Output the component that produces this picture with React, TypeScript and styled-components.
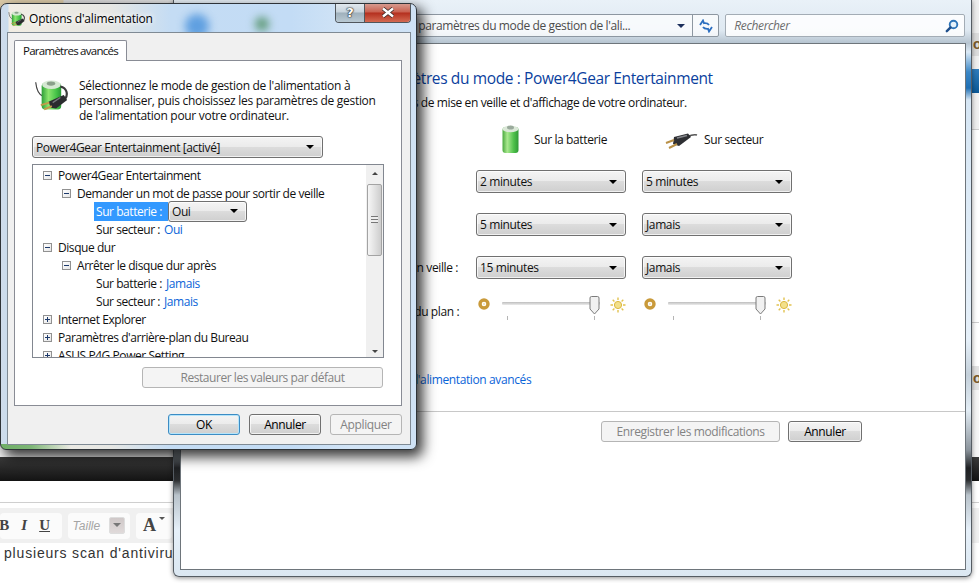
import { Fragment } from 'react'
import styled, { createGlobalStyle, css } from 'styled-components'

const GlobalStyle = createGlobalStyle`
  html, body {
    margin: 0;
    padding: 0;
    width: 979px;
    height: 583px;
    overflow: hidden;
    background: #fff;
  }
  * {
    box-sizing: border-box;
  }
  body {
    font-family: 'Open Sans', 'Noto Sans', sans-serif;
    font-size: 12px;
    letter-spacing: -0.38px;
    color: #111;
  }
`

const Desktop = styled.div`
  position: relative;
  width: 979px;
  height: 583px;
  overflow: hidden;
`

/* ---- browser page behind the windows ---- */

const Page = styled.div`
  display: flex;
  flex-direction: column;
  height: 583px;
  font-family: 'Liberation Sans', sans-serif;
  letter-spacing: 0;
`

const Band = styled.div<{ $h: number; $bg: string; $line?: boolean }>`
  height: ${({ $h }) => $h}px;
  background: ${({ $bg }) => $bg};
  border-bottom: ${({ $line }) => ($line ? '1px solid #cfcfcf' : 'none')};
  padding-left: 973px;
  font-size: 14px;
  font-weight: bold;
  line-height: ${({ $h }) => $h}px;
  color: #7a5a2a;
  white-space: nowrap;
  overflow: hidden;
`

const EditorBar = styled.div`
  height: 35px;
  flex: none;
  background: #f0f0f0;
  display: flex;
  align-items: center;
  gap: 6px;
`

const EditorGroup = styled.div<{ $w: number }>`
  width: ${({ $w }) => $w}px;
  height: 26px;
  background: #fbfbfb;
  border-radius: 4px;
  display: flex;
  align-items: center;
  justify-content: space-around;
  overflow: hidden;
`

const StyleGroup = styled(EditorGroup)`
  justify-content: flex-end;
  gap: 12px;
  padding-right: 12px;
`

const StyleLetter = styled.span<{ $italic?: boolean; $under?: boolean }>`
  font-family: 'Liberation Serif', serif;
  font-weight: bold;
  font-size: 15px;
  color: #444;
  flex: none;
  font-style: ${({ $italic }) => ($italic ? 'italic' : 'normal')};
  text-decoration: ${({ $under }) => ($under ? 'underline' : 'none')};
`

const SizeLabel = styled.span`
  font-size: 12px;
  font-style: italic;
  color: #a5a5a5;
`

const SizeCaret = styled.span`
  width: 16px;
  height: 17px;
  border-radius: 2px;
  background: linear-gradient(#cfc8c8, #e0dada);
  border: 1px solid #ddd;
  position: relative;
  &::after {
    content: '';
    position: absolute;
    left: 3px;
    top: 5px;
    border: 4px solid transparent;
    border-top: 4px solid #777;
  }
`

const BigLetter = styled.span`
  font-family: 'Liberation Serif', serif;
  font-weight: bold;
  font-size: 18px;
  color: #444;
  &::after {
    content: '';
    display: inline-block;
    margin-left: 3px;
    vertical-align: 8px;
    border: 3px solid transparent;
    border-top: 3px solid #555;
  }
`

const PostText = styled.div`
  padding: 2px 0 0 4px;
  font-size: 14px;
  line-height: 16px;
  letter-spacing: 0.82px;
  color: #333;
  white-space: nowrap;
`

/* ---- aero glass windows ---- */

const ParamWindow = styled.div`
  position: absolute;
  left: 173px;
  top: 0;
  width: 799px;
  height: 577px;
  border: 1px solid #555c63;
  border-top: none;
  border-radius: 0 0 6px 6px;
  padding-left: 6px;
  padding-right: 5px;
  display: flex;
  flex-direction: column;
  box-shadow: 0 1px 5px rgba(0, 0, 0, 0.45);
  background: linear-gradient(
    180deg,
    #e9f1f8 0,
    #dfe9f2 30px,
    #b6c4d0 43px,
    #dceaf6 52px,
    #3b87c6 72px,
    #1f6fb4 88px,
    #d6e6f4 100px,
    #e6f0f9 340px,
    #c4d0da 375px,
    #e3edf5 410px,
    #8b949c 450px,
    #1e2022 468px,
    #2a2c2e 480px,
    #b8c2ca 495px,
    #e6f0f9 530px,
    #dbe7f1 577px
  );
`

const NavBar = styled.div`
  height: 43px;
  flex: none;
  padding: 14px 1px 6px 0;
  display: flex;
  justify-content: flex-end;
  gap: 6px;
`

const AddressBox = styled.div`
  width: 545px;
  height: 23px;
  display: flex;
  align-items: center;
  justify-content: flex-end;
  background: rgba(255, 255, 255, 0.72);
  border: 1px solid #8d97a1;
  border-radius: 2px;
  color: #4c4c4c;
`

const AddressText = styled.span`
  white-space: nowrap;
  margin-right: 47px;
`

const AddressCaret = styled.span`
  width: 0;
  height: 0;
  border: 4px solid transparent;
  border-top: 4px solid #1c2f5c;
  border-bottom: none;
  margin-right: 7px;
`

const RefreshCell = styled.span`
  width: 26px;
  height: 100%;
  display: flex;
  align-items: center;
  justify-content: center;
  border-left: 1px solid #8d97a1;
`

const SearchBox = styled.div`
  width: 242px;
  height: 23px;
  background: rgba(255, 255, 255, 0.85);
  border: 1px solid #a3acb5;
  border-radius: 2px;
  display: flex;
  align-items: center;
  justify-content: space-between;
  padding: 0 5px 0 8px;
  font-style: italic;
  color: #6d6d6d;
`

const ContentPane = styled.div`
  width: 786px;
  height: 527px;
  background: #fff;
  border: 1px solid #6e757b;
  display: flex;
  flex-direction: column;
`

const ContentMain = styled.div`
  height: 368px;
  flex: none;
  border-bottom: 1px solid #c8c8c8;
  padding: 24px 0 0 102px;
`

const PlanTitle = styled.div`
  font-size: 15.5px;
  line-height: 20px;
  color: #0b3f9e;
  white-space: nowrap;
`

const PlanSubtitle = styled.div`
  margin-top: 7px;
  line-height: 16px;
  white-space: nowrap;
`

const SettingsGrid = styled.div`
  margin-top: 14px;
  display: grid;
  grid-template-columns: 177px 150px 150px;
  grid-template-rows: 45px 43px 43px 40px;
  column-gap: 16px;
`

const RowLabel = styled.div<{ $tall?: boolean }>`
  padding-left: 26px;
  line-height: ${({ $tall }) => ($tall ? 32 : 23)}px;
  white-space: nowrap;
`

const SliderLabel = styled(RowLabel)`
  padding-left: 22px;
`

const SourceCell = styled.div<{ $pad: number; $gap: number }>`
  display: flex;
  align-items: flex-start;
  height: 30px;
  padding-left: ${({ $pad }) => $pad}px;
  gap: ${({ $gap }) => $gap}px;
`

const SourceLabel = styled.span`
  line-height: 30px;
`

const PlugSlot = styled.span`
  padding-top: 7px;
  display: flex;
`

const comboFace = css`
  background: linear-gradient(180deg, #f4f4f4 0, #ebebeb 48%, #dcdcdc 50%, #cfcfcf 100%);
  border: 1px solid #707070;
  border-radius: 3px;
  box-shadow: inset 0 0 0 1px rgba(255, 255, 255, 0.7);
`

const Combo = styled.div<{ $w?: number; $h?: number }>`
  ${comboFace}
  width: ${({ $w }) => ($w ? `${$w}px` : '100%')};
  height: ${({ $h }) => $h ?? 23}px;
  display: flex;
  align-items: center;
  justify-content: space-between;
  padding: 0 6px 0 3px;
  white-space: nowrap;
  flex: none;
  &::after {
    content: '';
    border: 4px solid transparent;
    border-top: 4px solid #000;
    border-bottom: none;
    width: 0;
    height: 0;
    margin-right: 2px;
  }
`

const PlanCombo = styled(Combo)`
  margin-top: 13px;
`

const SliderCell = styled.div`
  display: flex;
  align-items: flex-start;
  padding-left: 2px;
`

const DimSlot = styled.span`
  margin-top: 2px;
  display: flex;
`

const SliderTrack = styled.div`
  position: relative;
  width: 98px;
  height: 26px;
  margin-left: 12px;
  &::before {
    content: '';
    position: absolute;
    left: 0;
    right: 0;
    top: 6px;
    height: 3px;
    background: linear-gradient(#bdbdbd, #ececec);
    border-radius: 1px;
  }
`

const SliderThumb = styled.svg`
  position: absolute;
  left: 87px;
  top: 0;
`

const SliderTick = styled.span<{ $x: number }>`
  position: absolute;
  left: ${({ $x }) => $x}px;
  top: 20px;
  width: 1px;
  height: 4px;
  background: #b5b5b5;
`

const SunSlot = styled.span`
  margin: 1px 0 0 10px;
  display: flex;
`

const AdvancedLink = styled.div`
  margin-top: 44px;
  line-height: 16px;
  color: #0a64d8;
  white-space: nowrap;
`

const ContentFooter = styled.div`
  display: flex;
  justify-content: flex-end;
  gap: 8px;
  padding: 9px 103px 0 0;
`

const Button = styled.button<{ $w: number; $h?: number; $default?: boolean }>`
  width: ${({ $w }) => $w}px;
  height: ${({ $h }) => $h ?? 21}px;
  font: inherit;
  letter-spacing: inherit;
  padding: 0;
  flex: none;
  color: #000;
  border-radius: 3px;
  border: 1px solid ${({ $default }) => ($default ? '#3c8cc4' : '#707070')};
  background: linear-gradient(180deg, #f4f4f4 0, #ebebeb 48%, #dcdcdc 50%, #cfcfcf 100%);
  box-shadow: inset 0 0 0 1px ${({ $default }) => ($default ? '#b5e4fa' : 'rgba(255,255,255,0.7)')};
  &:disabled {
    color: #838383;
    border-color: #b5b5b5;
    background: #f4f4f4;
    box-shadow: none;
  }
`

const DialogWindow = styled.div`
  position: absolute;
  left: 0;
  top: 3px;
  width: 417px;
  height: 447px;
  border: 1px solid #2e3338;
  border-radius: 7px 7px 6px 6px;
  display: flex;
  flex-direction: column;
  overflow: hidden;
  padding: 0 5px 4px 6px;
  background:
    linear-gradient(90deg, #6fae66 0, #7db676 30px, rgba(190, 220, 240, 0) 70px) left bottom / 100% 5px no-repeat,
    linear-gradient(90deg, #cfdceb 0, #c9dced 7px, rgba(201, 220, 237, 0) 8px) left top / 100% 100% no-repeat,
    linear-gradient(90deg, #f2ede3 0, #e6e7e4 110px, #c4dcf4 170px, #c3dcf5 290px, #d2e4f6 350px, #cfe2f5 100%);
`

const DialogShadow = styled.div`
  position: absolute;
  left: 0;
  top: 3px;
  width: 417px;
  height: 447px;
  border-radius: 7px;
  box-shadow: 5px 6px 13px 1px rgba(0, 0, 0, 0.78);
`

const GlassBlob = styled.span<{ $x: number; $y: number; $size: number; $color: string }>`
  position: absolute;
  left: ${({ $x }) => $x}px;
  top: ${({ $y }) => $y}px;
  width: ${({ $size }) => $size}px;
  height: ${({ $size }) => $size}px;
  border-radius: 50%;
  background: ${({ $color }) => $color};
  filter: blur(4px);
`

const TitleBar = styled.div`
  position: relative;
  height: 28px;
  flex: none;
  display: flex;
  align-items: center;
  gap: 4px;
  padding: 0 0 0 1px;
`

const TitleText = styled.span`
  position: relative;
  font-size: 12px;
  letter-spacing: -0.2px;
  color: #000;
  text-shadow: 0 0 6px #fff, 0 0 6px #fff;
  white-space: nowrap;
`

const CaptionButtons = styled.div`
  position: absolute;
  right: 0;
  top: -1px;
  height: 20px;
  display: flex;
  border: 1px solid #50565c;
  border-top: none;
  border-radius: 0 0 4px 4px;
  overflow: hidden;
`

const CaptionButton = styled.span<{ $close?: boolean }>`
  width: ${({ $close }) => ($close ? 46 : 28)}px;
  display: flex;
  align-items: center;
  justify-content: center;
  font-family: 'DejaVu Sans', sans-serif;
  font-weight: bold;
  font-size: 13px;
  letter-spacing: 0;
  color: #fff;
  text-shadow: 0 0 1px #222, 0 0 1px #222, 0 0 2px #222;
  border-left: ${({ $close }) => ($close ? '1px solid #50565c' : 'none')};
  background: ${({ $close }) =>
    $close
      ? 'linear-gradient(180deg, #d8a196 0, #c9604f 48%, #b42f1e 52%, #d46a52 100%)'
      : 'linear-gradient(180deg, #e4ebf1 0, #c7d3dc 48%, #9fb0bb 52%, #b9c9d3 100%)'};
`

const DialogClient = styled.div`
  position: relative;
  flex: 1;
  background: #f0f0f0;
  border: 1px solid #7f8a94;
  padding: 7px 8px 0 6px;
  display: flex;
  flex-direction: column;
  align-items: flex-start;
`

const TabHead = styled.div`
  position: relative;
  z-index: 1;
  width: 113px;
  height: 21px;
  margin-bottom: -1px;
  background: #fff;
  border: 1px solid #898c95;
  border-bottom: none;
  border-radius: 2px 2px 0 0;
  text-align: center;
  font-size: 11.5px;
  letter-spacing: -0.74px;
  line-height: 20px;
  white-space: nowrap;
`

const TabPage = styled.div`
  width: 388px;
  height: 346px;
  flex: none;
  background: #fff;
  border: 1px solid #898c95;
  padding: 17px 0 0 17px;
  display: flex;
  flex-direction: column;
  align-items: flex-start;
`

const IntroRow = styled.div`
  display: flex;
  padding-left: 2px;
  gap: 11px;
  height: 45px;
`

const IntroText = styled.div`
  line-height: 15px;
  width: 300px;
  letter-spacing: -0.3px;
`

const Tree = styled.div`
  margin-top: 6px;
  width: 352px;
  height: 194px;
  flex: none;
  border: 1px solid #828790;
  display: flex;
  overflow: hidden;
  letter-spacing: -0.44px;
`

const TreeList = styled.div`
  flex: 1;
  overflow: hidden;
  padding-top: 1px;
`

const TreeRow = styled.div<{ $level: number }>`
  height: 18px;
  display: flex;
  align-items: center;
  white-space: nowrap;
  padding-left: ${({ $level }) => [10, 29, 61][$level]}px;
`

const Expander = styled.span<{ $open: boolean }>`
  position: relative;
  width: 9px;
  height: 9px;
  margin-right: 6px;
  flex: none;
  border: 1px solid #919191;
  background: linear-gradient(135deg, #fff, #e6e6e6);
  &::before {
    content: '';
    position: absolute;
    left: 1px;
    top: 3px;
    width: 5px;
    height: 1px;
    background: #1d3a6c;
  }
  &::after {
    content: '';
    display: ${({ $open }) => ($open ? 'none' : 'block')};
    position: absolute;
    left: 3px;
    top: 1px;
    width: 1px;
    height: 5px;
    background: #1d3a6c;
  }
`

const OptionLabel = styled.span<{ $selected?: boolean }>`
  display: flex;
  align-items: center;
  height: 19px;
  padding: 0 2px;
  width: ${({ $selected }) => ($selected ? '74px' : 'auto')};
  background: ${({ $selected }) => ($selected ? '#3399ff' : 'transparent')};
  color: ${({ $selected }) => ($selected ? '#fff' : 'inherit')};
`

const OptionValue = styled.span`
  color: #0a64d8;
  margin-left: 2px;
`

const ScrollBar = styled.div`
  width: 17px;
  flex: none;
  background: #f0f0f0;
  display: flex;
  flex-direction: column;
  align-items: center;
  justify-content: space-between;
  padding: 7px 0 4px;
  position: relative;
`

const ScrollArrow = styled.span<{ $down?: boolean }>`
  width: 0;
  height: 0;
  border-left: 3px solid transparent;
  border-right: 3px solid transparent;
  border-bottom: ${({ $down }) => ($down ? 'none' : '3px solid #444')};
  border-top: ${({ $down }) => ($down ? '3px solid #444' : 'none')};
`

const ScrollThumb = styled.span`
  position: absolute;
  left: 1px;
  top: 19px;
  width: 15px;
  height: 72px;
  border: 1px solid #a3a3a3;
  border-radius: 2px;
  background: linear-gradient(90deg, #f6f6f6, #e2e2e2 50%, #cdcdcd);
  &::after {
    content: '';
    position: absolute;
    left: 3px;
    top: 31px;
    width: 7px;
    height: 7px;
    background: repeating-linear-gradient(180deg, #777 0, #777 1px, #eee 1px, #eee 3px);
  }
`

const RestoreButton = styled(Button)`
  margin: 9px 0 0 110px;
  letter-spacing: -0.45px;
`

const DialogFooter = styled.div`
  display: flex;
  gap: 9px;
  align-self: flex-end;
  margin-top: 8px;
`

function PowerIcon({ size }: { size: number }) {
  return (
    <svg width={size} height={size} viewBox="3 3 40 38">
      <defs>
        <linearGradient id="powerGreen" x1="0" x2="1" y1="0" y2="0">
          <stop offset="0" stopColor="#2e9f3a" />
          <stop offset="0.35" stopColor="#8be56e" />
          <stop offset="0.75" stopColor="#45c348" />
          <stop offset="1" stopColor="#2a9a36" />
        </linearGradient>
      </defs>
      <path d="M5 7C6 16 8 21 13 23" fill="none" stroke="#444" strokeWidth="1.4" />
      <rect x="12" y="8" width="23" height="31" rx="4" fill="url(#powerGreen)" />
      <ellipse cx="23.5" cy="10" rx="11" ry="5" fill="#d5e8d2" />
      <ellipse cx="23" cy="8.5" rx="5" ry="2.5" fill="#8aa08a" />
      <path d="M34 12C42 14 43 21 40 26" fill="none" stroke="#3c3c3c" strokeWidth="2.6" />
      <path d="M38 22L42 28L29 38L23 37L20 30Z" fill="#2b2c2f" />
      <path d="M34 25L25 31" stroke="#77797e" strokeWidth="1.6" />
      <path d="M21 31L11 34M24 35L15 39" stroke="#c49a4a" strokeWidth="2.2" />
    </svg>
  )
}

function BatteryIcon() {
  return (
    <svg width="17" height="28" viewBox="0 0 17 28">
      <defs>
        <linearGradient id="batteryGreen" x1="0" x2="1" y1="0" y2="0">
          <stop offset="0" stopColor="#4aa93f" />
          <stop offset="0.3" stopColor="#a9e88f" />
          <stop offset="0.7" stopColor="#4fc14b" />
          <stop offset="1" stopColor="#2f9a36" />
        </linearGradient>
      </defs>
      <rect x="0.5" y="2" width="16" height="26" rx="3" fill="url(#batteryGreen)" />
      <ellipse cx="8.5" cy="4" rx="8" ry="3.2" fill="#dbe8d8" />
      <ellipse cx="8.5" cy="2.6" rx="3.5" ry="2" fill="#9aaa9c" />
    </svg>
  )
}

function PlugIcon() {
  return (
    <svg width="33" height="17" viewBox="0 0 33 17">
      <path d="M22 5C26 3 29 2 32 3" fill="none" stroke="#555" strokeWidth="1.6" />
      <path d="M9 5L23 1.5L26 5L14 14L8 12Z" fill="#2e2f33" />
      <path d="M12 6L22 3.5" stroke="#85878c" strokeWidth="1.4" />
      <path d="M9 8L1 11M12 12L4 16" stroke="#b99148" strokeWidth="2" />
    </svg>
  )
}

function DimIcon() {
  return (
    <svg width="12" height="12" viewBox="0 0 12 12">
      <circle cx="6" cy="6" r="4" fill="none" stroke="#c99a3a" strokeWidth="3.4" />
      <circle cx="6" cy="6" r="1.2" fill="#f4e8c4" />
    </svg>
  )
}

function SunIcon() {
  return (
    <svg width="16" height="16" viewBox="0 0 16 16">
      <circle cx="8" cy="8" r="3.6" fill="#f3e08a" stroke="#dcb83e" strokeWidth="1" />
      <path
        d="M8 0.5V3M8 13V15.5M0.5 8H3M13 8H15.5M2.7 2.7L4.4 4.4M11.6 11.6L13.3 13.3M13.3 2.7L11.6 4.4M4.4 11.6L2.7 13.3"
        stroke="#e2c24f"
        strokeWidth="1.4"
      />
    </svg>
  )
}

function RefreshIcon() {
  return (
    <svg width="14" height="14" viewBox="0 0 14 14">
      <path d="M1 6L4 1.5L5 4.2C7 4 9 4.5 10 6" fill="none" stroke="#2c6fc0" strokeWidth="1.8" />
      <path d="M13 8L10 12.5L9 9.8C7 10 5 9.5 4 8" fill="none" stroke="#2c6fc0" strokeWidth="1.8" />
    </svg>
  )
}

function SearchIcon() {
  return (
    <svg width="14" height="14" viewBox="0 0 14 14">
      <circle cx="8.5" cy="5.5" r="3.8" fill="#e6f2fb" stroke="#2d74b8" strokeWidth="1.9" />
      <path d="M5.6 8.4L1.8 12.2" stroke="#1f4f8c" strokeWidth="2.4" strokeLinecap="round" />
    </svg>
  )
}

function CloseGlyph() {
  return (
    <svg width="14" height="11" viewBox="0 0 14 11">
      <path d="M2 1.5L12 9.5M12 1.5L2 9.5" stroke="#3a2a28" strokeWidth="4" />
      <path d="M2 1.5L12 9.5M12 1.5L2 9.5" stroke="#fff" strokeWidth="2.4" />
    </svg>
  )
}

function Slider() {
  return (
    <SliderCell>
      <DimSlot>
        <DimIcon />
      </DimSlot>
      <SliderTrack>
        <SliderThumb width="11" height="19" viewBox="0 0 11 19">
          <path d="M1 2Q1 .5 2.5 .5H8.5Q10 .5 10 2V13L5.5 18L1 13Z" fill="#f1f1f1" stroke="#7b7b7b" />
        </SliderThumb>
        <SliderTick $x={5} />
        <SliderTick $x={92} />
      </SliderTrack>
      <SunSlot>
        <SunIcon />
      </SunSlot>
    </SliderCell>
  )
}

const settingRows = [
  { label: 'Atténuer l’affichage :', battery: '2 minutes', mains: '5 minutes' },
  { label: 'Éteindre l’écran :', battery: '5 minutes', mains: 'Jamais' },
  { label: 'Mettre l’ordinateur en veille :', battery: '15 minutes', mains: 'Jamais' },
]

export default function App() {
  return (
    <Desktop>
      <GlobalStyle />

      <Page>
        <Band $h={33} $bg="linear-gradient(90deg, #dccba8 0, #dccba8 63px, #d8d8d8 64px, #eeeeee 300px)" />
        <Band $h={23} $bg="#dcdcdc">or</Band>
        <Band $h={13} $bg="#f0f0f0" />
        <Band $h={24} $bg="linear-gradient(#2f7dbd, #0a5896)" />
        <Band $h={37} $bg="#f0f0f0" $line />
        <Band $h={193} $bg="#ffffff" $line />
        <Band $h={43} $bg="#ffffff" />
        <Band $h={24} $bg="#e2e2e2">or</Band>
        <Band $h={67} $bg="#f6f6f6" />
        <Band $h={24} $bg="linear-gradient(#3b3b3b, #131313)" />
        <Band $h={22} $bg="#ffffff" $line />
        <Band $h={5} $bg="#ffffff" />
        <EditorBar>
          <StyleGroup $w={62}>
            <StyleLetter>B</StyleLetter>
            <StyleLetter $italic>I</StyleLetter>
            <StyleLetter $under>U</StyleLetter>
          </StyleGroup>
          <EditorGroup $w={62}>
            <SizeLabel>Taille</SizeLabel>
            <SizeCaret />
          </EditorGroup>
          <EditorGroup $w={36}>
            <BigLetter>A</BigLetter>
          </EditorGroup>
        </EditorBar>
        <PostText>plusieurs scan d'antivirus</PostText>
      </Page>

      <ParamWindow>
        <NavBar>
          <AddressBox>
            <AddressText>Modifier les paramètres du mode de gestion de l'ali...</AddressText>
            <AddressCaret />
            <RefreshCell>
              <RefreshIcon />
            </RefreshCell>
          </AddressBox>
          <SearchBox>
            Rechercher
            <SearchIcon />
          </SearchBox>
        </NavBar>
        <ContentPane>
          <ContentMain>
            <PlanTitle>Modifier les paramètres du mode : Power4Gear Entertainment</PlanTitle>
            <PlanSubtitle>Choisissez les paramètres de mise en veille et d'affichage de votre ordinateur.</PlanSubtitle>
            <SettingsGrid>
              <div />
              <SourceCell $pad={26} $gap={15}>
                <BatteryIcon />
                <SourceLabel>Sur la batterie</SourceLabel>
              </SourceCell>
              <SourceCell $pad={23} $gap={6}>
                <PlugSlot>
                  <PlugIcon />
                </PlugSlot>
                <SourceLabel>Sur secteur</SourceLabel>
              </SourceCell>
              {settingRows.map((row) => (
                <Fragment key={row.label}>
                  <RowLabel>{row.label}</RowLabel>
                  <Combo>{row.battery}</Combo>
                  <Combo>{row.mains}</Combo>
                </Fragment>
              ))}
              <SliderLabel $tall>Ajuster la luminosité du plan :</SliderLabel>
              <Slider />
              <Slider />
            </SettingsGrid>
            <AdvancedLink>Modifier les paramètres d'alimentation avancés</AdvancedLink>
          </ContentMain>
          <ContentFooter>
            <Button $w={179} disabled>Enregistrer les modifications</Button>
            <Button $w={74}>Annuler</Button>
          </ContentFooter>
        </ContentPane>
      </ParamWindow>

      <DialogShadow />
      <DialogWindow>
        <GlassBlob $x={184} $y={10} $size={24} $color="#5f9fe0" />
        <GlassBlob $x={254} $y={13} $size={14} $color="#5f9a78" />
        <TitleBar>
          <PowerIcon size={17} />
          <TitleText>Options d'alimentation</TitleText>
          <CaptionButtons>
            <CaptionButton>?</CaptionButton>
            <CaptionButton $close>
              <CloseGlyph />
            </CaptionButton>
          </CaptionButtons>
        </TitleBar>
        <DialogClient>
          <TabHead>Paramètres avancés</TabHead>
          <TabPage>
            <IntroRow>
              <PowerIcon size={34} />
              <IntroText>
                Sélectionnez le mode de gestion de l'alimentation à personnaliser, puis choisissez les
                paramètres de gestion de l'alimentation pour votre ordinateur.
              </IntroText>
            </IntroRow>
            <PlanCombo $w={291} $h={22}>Power4Gear Entertainment [activé]</PlanCombo>
            <Tree>
              <TreeList>
                <TreeRow $level={0}>
                  <Expander $open />
                  Power4Gear Entertainment
                </TreeRow>
                <TreeRow $level={1}>
                  <Expander $open />
                  Demander un mot de passe pour sortir de veille
                </TreeRow>
                <TreeRow $level={2}>
                  <OptionLabel $selected>Sur batterie :</OptionLabel>
                  <Combo $w={79} $h={21}>Oui</Combo>
                </TreeRow>
                <TreeRow $level={2}>
                  <OptionLabel>Sur secteur :</OptionLabel>
                  <OptionValue>Oui</OptionValue>
                </TreeRow>
                <TreeRow $level={0}>
                  <Expander $open />
                  Disque dur
                </TreeRow>
                <TreeRow $level={1}>
                  <Expander $open />
                  Arrêter le disque dur après
                </TreeRow>
                <TreeRow $level={2}>
                  <OptionLabel>Sur batterie :</OptionLabel>
                  <OptionValue>Jamais</OptionValue>
                </TreeRow>
                <TreeRow $level={2}>
                  <OptionLabel>Sur secteur :</OptionLabel>
                  <OptionValue>Jamais</OptionValue>
                </TreeRow>
                <TreeRow $level={0}>
                  <Expander $open={false} />
                  Internet Explorer
                </TreeRow>
                <TreeRow $level={0}>
                  <Expander $open={false} />
                  Paramètres d'arrière-plan du Bureau
                </TreeRow>
                <TreeRow $level={0}>
                  <Expander $open={false} />
                  ASUS P4G Power Setting
                </TreeRow>
              </TreeList>
              <ScrollBar>
                <ScrollArrow />
                <ScrollThumb />
                <ScrollArrow $down />
              </ScrollBar>
            </Tree>
            <RestoreButton $w={241} disabled>Restaurer les valeurs par défaut</RestoreButton>
          </TabPage>
          <DialogFooter>
            <Button $w={72} $default>OK</Button>
            <Button $w={72}>Annuler</Button>
            <Button $w={72} disabled>Appliquer</Button>
          </DialogFooter>
        </DialogClient>
      </DialogWindow>
    </Desktop>
  )
}
